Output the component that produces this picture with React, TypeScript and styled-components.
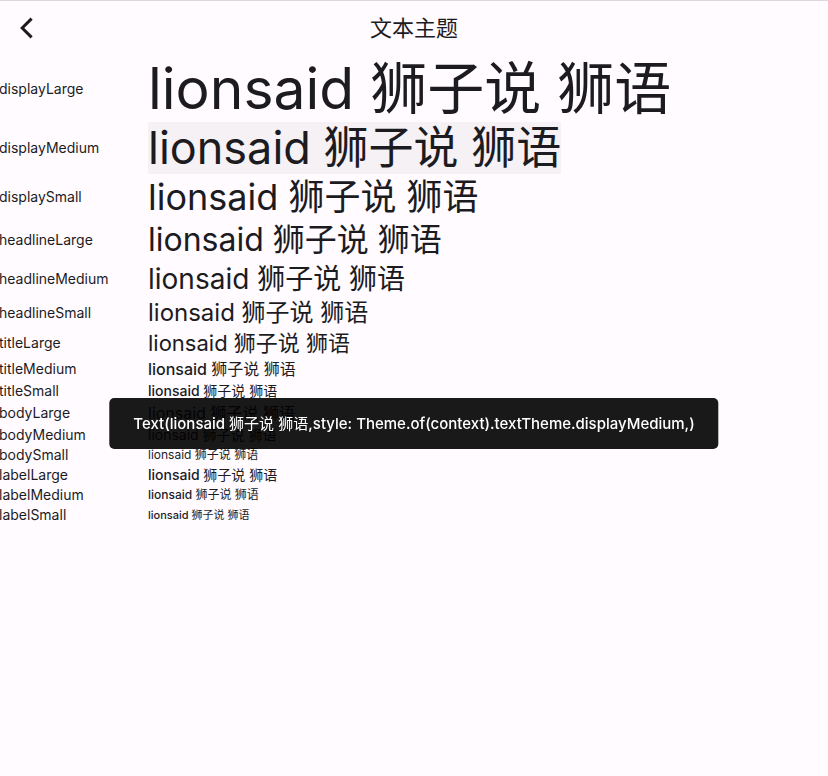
import React from "react";
import styled, { createGlobalStyle } from "styled-components";

const GlobalStyle = createGlobalStyle`
  * { box-sizing: border-box; }
  body {
    margin: 0;
    overflow-x: hidden;
    background: #fffbff;
    color: #1c1b1f;
    font-family: Inter, "Noto Sans CJK SC", sans-serif;
  }
`;

const Page = styled.div`
  min-height: 100vh;
  border-top: 1px solid #dcd8dd;
  overflow-x: hidden;
`;

const AppBar = styled.header`
  display: grid;
  grid-template-columns: 56px 1fr 56px;
  align-items: center;
  height: 54px;
  margin-bottom: 2px;
`;

const BackButton = styled.button`
  display: grid;
  place-items: center;
  width: 52px;
  height: 48px;
  padding: 0;
  border: 0;
  background: none;
  color: inherit;
  cursor: pointer;
`;

const Title = styled.h1`
  margin: 0;
  font-size: 22px;
  font-weight: 400;
  line-height: 28px;
  text-align: center;
`;

const StyleTable = styled.table`
  border-collapse: collapse;
  margin-left: -1px;
  white-space: nowrap;
`;

const Row = styled.tr<{ $height: number }>`
  height: ${(p) => p.$height}px;
`;

const Label = styled.th`
  width: 149px;
  padding: 0;
  font-size: 14px;
  font-weight: 400;
  line-height: 20px;
  text-align: left;
`;

const SampleCell = styled.td`
  padding: 0;
`;

const Sample = styled.button<{ $size: number; $line: number; $weight: number; $active: boolean }>`
  display: block;
  padding: 0;
  border: 0;
  background: ${(p) => (p.$active ? "#f5f1f5" : "none")};
  color: inherit;
  font-family: inherit;
  font-size: ${(p) => p.$size}px;
  font-weight: ${(p) => p.$weight};
  line-height: ${(p) => p.$line}px;
  cursor: pointer;
`;

const Hanzi = styled.span`
  font-weight: 400;
`;

const Toast = styled.div`
  position: fixed;
  top: 398px;
  left: 50%;
  transform: translateX(-50%);
  padding: 14px 24px;
  border-radius: 5px;
  background: rgba(0, 0, 0, 0.9);
  color: #fff;
  font-size: 15px;
  font-weight: 500;
  line-height: 23px;
  white-space: nowrap;
`;

const styles = [
  { name: "displayLarge", size: 57, height: 64, weight: 400 },
  { name: "displayMedium", size: 45, height: 54, weight: 400 },
  { name: "displaySmall", size: 36, height: 44, weight: 400 },
  { name: "headlineLarge", size: 32, height: 42, weight: 400 },
  { name: "headlineMedium", size: 28, height: 36, weight: 400 },
  { name: "headlineSmall", size: 24, height: 32, weight: 400 },
  { name: "titleLarge", size: 22, height: 28, weight: 400 },
  { name: "titleMedium", size: 16, height: 24, weight: 500 },
  { name: "titleSmall", size: 14, height: 20, weight: 500 },
  { name: "bodyLarge", size: 16, height: 24, weight: 400 },
  { name: "bodyMedium", size: 14, height: 20, weight: 400 },
  { name: "bodySmall", size: 12, height: 20, weight: 400 },
  { name: "labelLarge", size: 14, height: 20, weight: 500 },
  { name: "labelMedium", size: 12, height: 20, weight: 500 },
  { name: "labelSmall", size: 11, height: 20, weight: 500 },
];

const selected = "displayMedium";

function SampleText() {
  return (
    <>
      lionsaid <Hanzi>狮子说 狮语</Hanzi>
    </>
  );
}

export default function App() {
  return (
    <Page>
      <GlobalStyle />
      <AppBar>
        <BackButton aria-label="返回">
          <svg width="24" height="24" viewBox="0 0 24 24" fill="none" stroke="currentColor" strokeWidth="3">
            <path d="M17.6 2.6 8.2 12l9.4 9.4" />
          </svg>
        </BackButton>
        <Title>文本主题</Title>
      </AppBar>
      <StyleTable>
        <tbody>
          {styles.map((s) => (
            <Row key={s.name} $height={s.height}>
              <Label scope="row">{s.name}</Label>
              <SampleCell>
                <Sample
                  $size={s.size}
                  $line={s.height > 50 ? s.height - 2 : s.height}
                  $weight={s.weight}
                  $active={s.name === selected}
                >
                  <SampleText />
                </Sample>
              </SampleCell>
            </Row>
          ))}
        </tbody>
      </StyleTable>
      <Toast role="status">
        Text(
        <SampleText />
        ,style: Theme.of(context).textTheme.displayMedium,)
      </Toast>
    </Page>
  );
}
